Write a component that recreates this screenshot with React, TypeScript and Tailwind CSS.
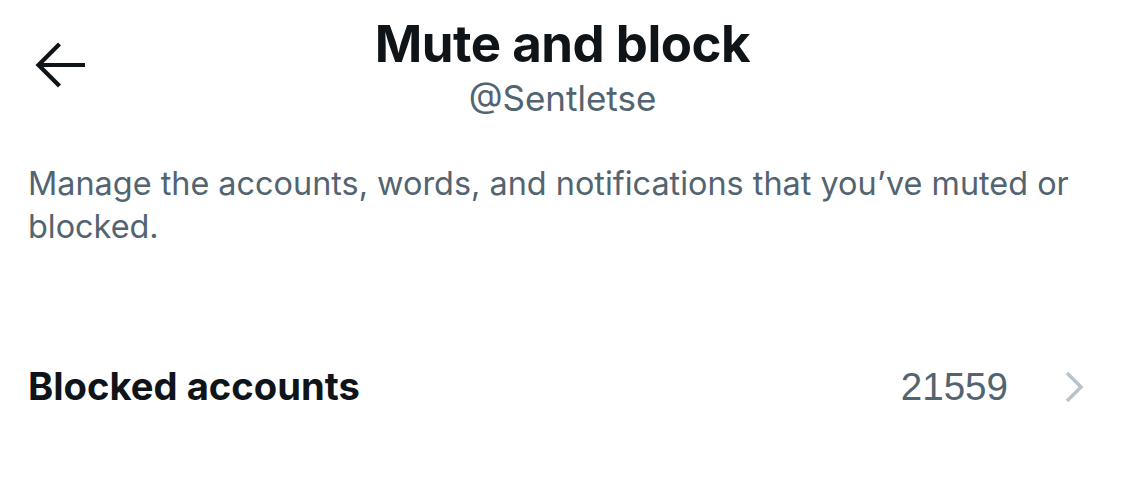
import type { FC } from 'react';

const font = { fontFamily: 'Inter, "Noto Sans", sans-serif' };

const App: FC = () => {
    return (
        <div className="w-[1125px] h-[486px] bg-white text-[#0f1419] overflow-hidden" style={font}>
            {/* Header */}
            <div className="relative flex flex-col items-center pt-[13px]">
                <button className="absolute left-[34px] top-[41px] w-[52px] h-[48px] flex items-center justify-center">
                    <svg width="50" height="46" viewBox="0 0 50 46" fill="none" stroke="#0f1419" strokeWidth="4.2" strokeLinecap="butt">
                        <path d="M3 23H50" />
                        <path d="M24.5 2L3.5 23L24.5 44" />
                    </svg>
                </button>
                <h1 className="text-[51px] leading-[62px] font-bold tracking-[-0.5px]">Mute and block</h1>
                <div className="text-[35px] leading-[44px] text-[#536471] mt-[1px]">@Sentletse</div>
            </div>

            {/* Description */}
            <p className="px-[28px] mt-[42px] text-[32.4px] leading-[43px] text-[#536471]">
                Manage the accounts, words, and notifications that you’ve muted or blocked.
            </p>

            {/* Rows */}
            <div className="mt-[104px] flex items-center justify-between pl-[28px] pr-[41px] h-[70px]">
                <span className="text-[38.2px] font-bold">Blocked accounts</span>
                <div className="flex items-center gap-[56px]">
                    <span className="text-[38.6px] text-[#536471]" style={{ fontFamily: '"Liberation Sans", Arial, sans-serif' }}>21559</span>
                    <svg width="20" height="32" viewBox="0 0 20 32" fill="none" stroke="#b9c3ca" strokeWidth="3.5">
                        <path d="M3 2L17 16L3 30" />
                    </svg>
                </div>
            </div>
        </div>
    );
};

export default App;
